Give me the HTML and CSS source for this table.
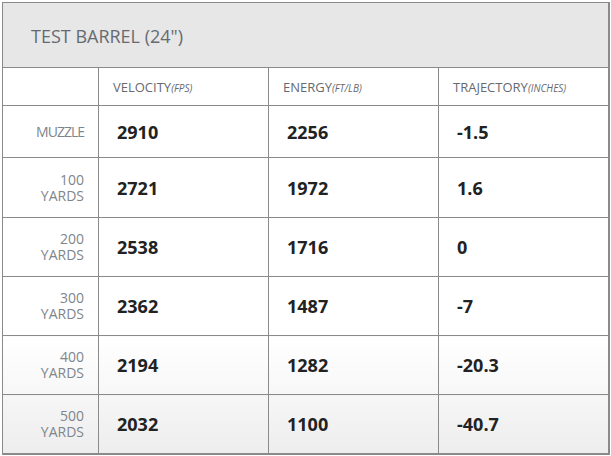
FILE: index.html
```html
<!DOCTYPE html>
<html>
<head>
<meta charset="utf-8">
<link rel="stylesheet" href="styles.css">
</head>
<body>
<div class="wrap">
<table class="ballistics">
  <colgroup>
    <col class="c-label">
    <col class="c-data">
    <col class="c-data">
    <col class="c-data">
  </colgroup>
  <thead>
    <tr class="title-row"><th colspan="4" class="title">TEST BARREL (24")</th></tr>
    <tr class="head-row">
      <th class="hd"></th>
      <th class="hd">VELOCITY<i>(FPS)</i></th>
      <th class="hd">ENERGY<i>(FT/LB)</i></th>
      <th class="hd">TRAJECTORY<i>(INCHES)</i></th>
    </tr>
  </thead>
  <tbody>
    <tr class="r-muzzle"><td class="lbl lbl-tight">MUZZLE</td><td class="val">2910</td><td class="val">2256</td><td class="val">-1.5</td></tr>
    <tr class="r-tall"><td class="lbl">100<br>YARDS</td><td class="val">2721</td><td class="val">1972</td><td class="val">1.6</td></tr>
    <tr class="r"><td class="lbl">200<br>YARDS</td><td class="val">2538</td><td class="val">1716</td><td class="val">0</td></tr>
    <tr class="r"><td class="lbl">300<br>YARDS</td><td class="val">2362</td><td class="val">1487</td><td class="val">-7</td></tr>
    <tr class="r-tall r-fade"><td class="lbl">400<br>YARDS</td><td class="val">2194</td><td class="val">1282</td><td class="val">-20.3</td></tr>
    <tr class="r r-gray"><td class="lbl">500<br>YARDS</td><td class="val">2032</td><td class="val">1100</td><td class="val">-40.7</td></tr>
  </tbody>
</table>
</div>
</body>
</html>
```
FILE: styles.css
```css
html, body {
  margin: 0;
  padding: 0;
  background: #ffffff;
}
.wrap {
  padding: 2px 0 0 2px;
}
.ballistics {
  border-collapse: collapse;
  table-layout: fixed;
  width: 607px;
  font-family: "Open Sans", "Liberation Sans", sans-serif;
  border: 1px solid #8a8a8a;
  border-right-width: 2px;
  border-bottom-width: 2px;
}
.c-label { width: 96px; }
.c-data { width: 170px; }
.ballistics th,
.ballistics td {
  border: 1px solid #8a8a8a;
  padding: 0;
}
.ballistics .title-row { height: 65px; }
.ballistics .title {
  background: #e7e7e7;
  text-align: left;
  font-weight: 400;
  font-size: 18px;
  color: #666a70;
  padding-left: 28px;
  padding-top: 2px;
}
.ballistics .head-row { height: 38px; }
.ballistics .hd {
  text-align: left;
  font-weight: 400;
  font-size: 13px;
  color: #666a70;
  padding-left: 14px;
  padding-top: 1px;
}
.ballistics .hd i {
  font-size: 10px;
}
.ballistics .r-muzzle { height: 52px; }
.ballistics .r { height: 59px; }
.ballistics .r-tall { height: 60px; }
.ballistics .r-fade { height: 59px; }
.ballistics .lbl {
  text-align: right;
  font-size: 14px;
  line-height: 16px;
  color: #7f858c;
  padding-right: 14px;
}
.ballistics .lbl-tight {
  letter-spacing: -1px;
}
.ballistics .val {
  font-size: 18px;
  font-weight: 700;
  color: #222222;
  padding-left: 18px;
}
.ballistics .r-fade td {
  background: linear-gradient(#ffffff, #f7f7f7);
}
.ballistics .r-gray td {
  background: linear-gradient(#f6f6f6, #ededed);
}
```
